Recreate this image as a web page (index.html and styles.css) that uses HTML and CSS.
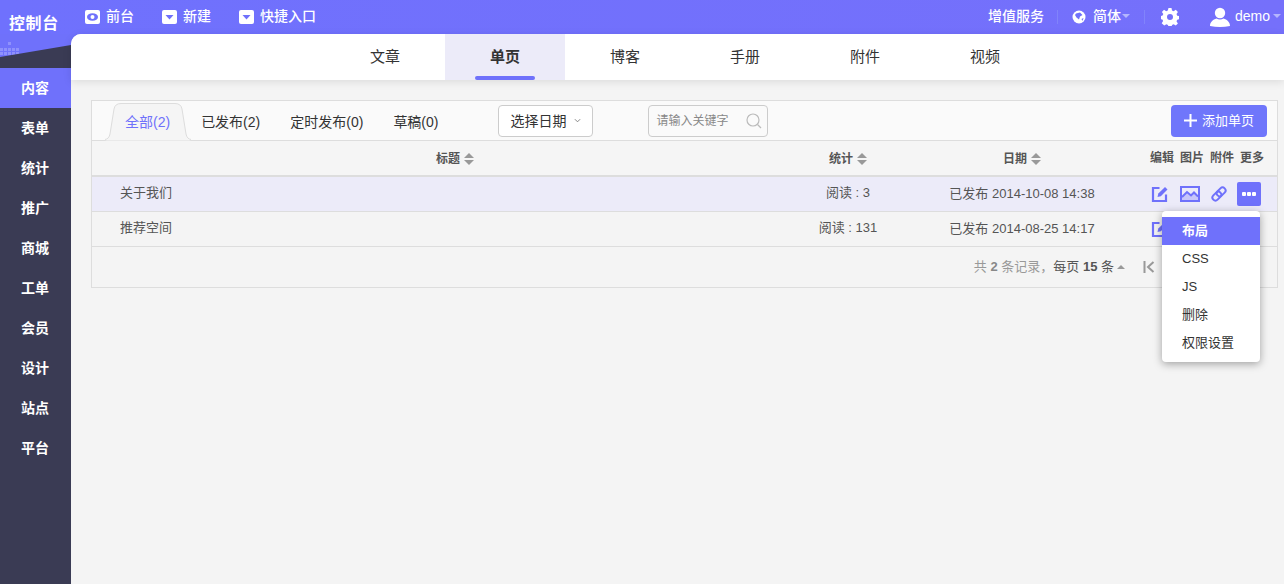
FILE: index.html
```html
<!DOCTYPE html>
<html lang="zh-CN">
<head>
<meta charset="utf-8">
<title>控制台</title>
<link rel="stylesheet" href="styles.css">
</head>
<body>
<div class="app">
  <header class="topbar">
    <div class="brand">控制台</div>
    <nav class="quick">
      <a class="quick-item"><svg class="qi" viewBox="0 0 15 14"><rect width="15" height="14" rx="2" fill="#fff"/><ellipse cx="7.5" cy="7" rx="5.5" ry="3.8" fill="#6f71fb"/><circle cx="7.5" cy="7" r="2" fill="#fff"/></svg>前台</a>
      <a class="quick-item"><svg class="qi" viewBox="0 0 15 14"><rect width="15" height="14" rx="2" fill="#fff"/><path d="M3.5 5h8l-4 4.500z" fill="#6f71fb"/></svg>新建</a>
      <a class="quick-item"><svg class="qi" viewBox="0 0 15 14"><rect width="15" height="14" rx="2" fill="#fff"/><path d="M3.5 5h8l-4 4.500z" fill="#6f71fb"/></svg>快捷入口</a>
    </nav>
    <div class="top-right">
      <a class="tr-item service">增值服务</a>
      <i class="sep"></i>
      <a class="tr-item lang"><svg class="globe" viewBox="0 0 14 14"><circle cx="7" cy="7" r="6.500" fill="#fff"/><path d="M4 3.500l4-1 2.500 2.500-2.500 1.500-1 3-2.500-2-1.500-2.500z" fill="#6f71fb"/><path d="M9.500 9l2-1-1 3z" fill="#6f71fb"/></svg>简体<i class="caret"></i></a>
      <i class="sep"></i>
      <a class="tr-item gear"><svg viewBox="0 0 18 18" width="18" height="18"><path fill="#fff" fill-rule="evenodd" d="M7.500 0h3l.5 2.500 1.600.7 2.200-1.400 2.100 2.100-1.400 2.200.7 1.600 2.300.5v3l-2.300.5-.7 1.600 1.400 2.200-2.100 2.100-2.200-1.400-1.600.7-.5 2.300h-3l-.5-2.300-1.600-.7-2.200 1.400L.7 15.300l1.400-2.200-.7-1.600L-.5 11V8l2.100-.5.7-1.600L.9 3.900 3 1.800l2.200 1.400 1.600-.7zM9 6a3 3 0 1 0 0 6 3 3 0 0 0 0-6z"/></svg></a>
      <a class="tr-item user"><svg class="avatar" viewBox="0 0 20 20"><circle cx="10" cy="6" r="5.200" fill="#fff"/><path d="M0 19c0-4 3-6.500 6.500-7.500 2 1.300 5 1.300 7 0C17 12.500 20 15 20 19q-10 2-20 0z" fill="#fff"/></svg>demo<i class="caret"></i></a>
    </div>
  </header>
  <div class="body">
    <aside class="sidebar">
      <div class="wedge">
        <svg viewBox="0 0 71 34" width="71" height="34"><g fill="#8f91fc"><rect x="0" y="14" width="3" height="3"/><rect x="4" y="14" width="3" height="3"/><rect x="8" y="8" width="3" height="3"/><rect x="8" y="14" width="3" height="3"/><rect x="8" y="18" width="3" height="3"/><rect x="12" y="14" width="3" height="3"/><rect x="16" y="14" width="3" height="3"/><rect x="0" y="18" width="3" height="3"/><rect x="4" y="18" width="3" height="3"/><rect x="12" y="18" width="3" height="3"/><rect x="16" y="18" width="3" height="2"/></g><path d="M0 23L71 11V34H0z" fill="#3a3b54"/></svg>
      </div>
      <ul class="menu">
        <li class="active">内容</li><li>表单</li><li>统计</li><li>推广</li><li>商城</li><li>工单</li><li>会员</li><li>设计</li><li>站点</li><li>平台</li>
      </ul>
    </aside>
    <main class="content">
      <nav class="subnav">
        <a>文章</a><a class="on">单页</a><a>博客</a><a>手册</a><a>附件</a><a>视频</a>
      </nav>
      <section class="panel">
        <div class="toolbar">
          <div class="tabs">
            <a class="tab current"><svg class="tab-shape" viewBox="0 0 86 40" width="86" height="40"><path d="M0 39.500Q4 39 5 33L9 8Q10 2.500 16 2.500H70Q76 2.500 77 8L81 33Q82 39 86 39.500z" fill="#f5f5f5"/><path d="M0 38.500Q4 38 5 33L9 8Q10 2.500 16 2.500H70Q76 2.500 77 8L81 33Q82 38 86 38.500" fill="none" stroke="#ddd"/></svg><span>全部(2)</span></a><a class="tab">已发布(2)</a><a class="tab">定时发布(0)</a><a class="tab">草稿(0)</a>
          </div>
          <button class="date-btn">选择日期<svg viewBox="0 0 8 5" width="7" height="5"><path d="M1 1l3 3 3-3" fill="none" stroke="#777"/></svg></button>
          <div class="search">请输入关键字<svg viewBox="0 0 16 16" width="16" height="16"><circle cx="7" cy="7" r="6" fill="none" stroke="#bbb" stroke-width="1.200"/><path d="M11.500 11.500l3.500 3.500" stroke="#bbb" stroke-width="1.200"/></svg></div>
          <button class="add-btn"><svg viewBox="0 0 13 13" width="13" height="13"><path d="M6.500 0v13M0 6.500h13" stroke="#fff" stroke-width="2"/></svg>添加单页</button>
        </div>
        <div class="row head">
          <div class="c-title">标题<i class="sort"></i></div>
          <div class="c-stat">统计<i class="sort"></i></div>
          <div class="c-date">日期<i class="sort"></i></div>
          <div class="c-act"><span>编辑</span><span>图片</span><span>附件</span><span>更多</span></div>
        </div>
        <div class="row item hover">
          <div class="c-name">关于我们</div>
          <div class="c-stat">阅读 : 3</div>
          <div class="c-date">已发布 2014-10-08 14:38</div>
          <div class="c-act icons">
            <svg class="ic" viewBox="0 0 18 18"><use href="#i-edit"/></svg>
            <svg class="ic wide" viewBox="0 0 20 16"><use href="#i-img"/></svg>
            <svg class="ic" viewBox="0 0 18 18"><use href="#i-link"/></svg>
            <span class="more"><i></i><i></i><i></i></span>
          </div>
        </div>
        <div class="row item">
          <div class="c-name">推荐空间</div>
          <div class="c-stat">阅读 : 131</div>
          <div class="c-date">已发布 2014-08-25 14:17</div>
          <div class="c-act icons">
            <svg class="ic" viewBox="0 0 18 18"><use href="#i-edit"/></svg>
          </div>
        </div>
        <div class="pager">
          <span class="total">共 <b>2</b> 条记录，</span><span class="per">每页 <b>15</b> 条</span><i class="up"></i>
          <svg class="first" viewBox="0 0 12 12" width="12" height="12"><path d="M1.500 0v12" stroke="#999" stroke-width="2"/><path d="M10.500 1L5 6l5.500 5" fill="none" stroke="#999" stroke-width="2"/></svg>
        </div>
        <div class="dropdown">
          <a class="sel">布局</a><a>CSS</a><a>JS</a><a>删除</a><a>权限设置</a>
        </div>
      </section>
    </main>
  </div>
</div>
<svg class="defs" width="0" height="0">
  <symbol id="i-edit" viewBox="0 0 18 18"><path d="M8.500 3H2v13h13V9.500" fill="none" stroke="#6f71fb" stroke-width="2.200"/><path d="M6.500 12l.8-3.500L14 2l2.500 2.500-6.700 6.700z" fill="#6f71fb"/></symbol>
  <symbol id="i-img" viewBox="0 0 20 16"><path d="M2 10l5-4 4 3 3-3 4 4v6H2z" fill="#6f71fb" fill-opacity=".3"/><rect x="1" y="1" width="18" height="14" fill="none" stroke="#6f71fb" stroke-width="2"/><path d="M2 11l5-5 4 3.500 3-3 4 4" fill="none" stroke="#6f71fb" stroke-width="2"/></symbol>
  <symbol id="i-link" viewBox="0 0 18 18"><g transform="rotate(-45 9 9)" fill="none" stroke="#6f71fb" stroke-width="2"><rect x="1" y="6" width="10" height="6" rx="3"/><rect x="7" y="6" width="10" height="6" rx="3"/></g></symbol>
</svg>
</body>
</html>
```
FILE: styles.css
```css
* { box-sizing: border-box; }
html, body { margin: 0; height: 100%; overflow: hidden; }
body { font: 14px/20px "Liberation Sans", "Noto Sans CJK SC", sans-serif; color: #333; background: #f4f4f4; }
a { color: inherit; text-decoration: none; }
ul { list-style: none; margin: 0; padding: 0; }
.defs { position: absolute; }
.app { height: 584px; display: flex; flex-direction: column; background: #6f71fb; }

.topbar { height: 34px; flex: none; display: flex; align-items: center; padding-bottom: 2px; color: #fff; background: linear-gradient(90deg, #6f71fd, #7570fb); }
.brand { width: 71px; padding: 16px 0 0 9px; font-size: 16px; font-weight: 700; letter-spacing: .6px; white-space: nowrap; }
.quick { display: flex; margin-left: 14px; gap: 28px; }
.quick-item { display: flex; align-items: center; gap: 6px; font-weight: 500; }
.qi { width: 15px; height: 14px; margin-top: 2px; }
.top-right { margin-left: auto; display: flex; align-items: center; }
.tr-item { display: flex; align-items: center; font-weight: 500; }
.service { margin-right: 13px; }
.sep { width: 1px; height: 14px; margin-top: 2px; background: #8183fb; }
.lang { margin: 0 14px 0 14px; }
.globe { width: 14px; height: 14px; margin: 2px 7px 0 0; }
.caret { width: 0; height: 0; margin-left: 1px; border: 4px solid transparent; border-top-color: #b5b6fd; border-bottom: 0; }
.gear { margin-left: 16px; }
.gear svg { margin-top: 2px; }
.user { margin-left: 31px; font-size: 14px; font-weight: 400; width: 74px; white-space: nowrap; }
.user .caret { margin-left: 3px; }
.avatar { width: 20px; height: 20px; margin: 2px 5px 0 0; }

.body { flex: 1; display: flex; min-height: 0; }
.sidebar { width: 71px; flex: none; background: #3a3b54; }
.wedge { height: 34px; background: #6f71fb; }
.wedge svg { display: block; }
.menu li { height: 40px; line-height: 40px; padding-right: 1px; text-align: center; color: #fff; font-weight: 700; font-size: 14px; }
.menu li.active { background: #6f71fb; }

.content { flex: 1; min-width: 0; background: #f4f4f4; border-top-left-radius: 10px; display: flex; flex-direction: column; }
.subnav { height: 46px; flex: none; background: #fff; border-top-left-radius: 10px; box-shadow: 0 2px 8px rgba(0,0,0,.1); display: flex; padding-left: 254px; }
.subnav a { width: 120px; text-align: center; line-height: 45px; font-size: 15px; color: #333; position: relative; }
.subnav a.on { background: #ecebf9; font-weight: 700; }
.subnav a.on::after { content: ""; position: absolute; left: 30px; right: 30px; bottom: 0; height: 4px; border-radius: 2px; background: #6f71fb; }

.panel { position: relative; margin: 20px 6px 0 20px; height: 188px; border: 1px solid #ddd; background: #f4f4f4; }
.toolbar { height: 40px; display: flex; align-items: center; background: #fafafa; border-bottom: 1px solid #ddd; }
.tabs { display: flex; align-self: flex-start; height: 39px; padding-left: 33px; }
.tab { padding-top: 11px; margin-right: 30px; color: #333; white-space: nowrap; }
.tab.current { color: #6f71fb; position: relative; margin-right: 31px; }
.tab.current + .tab { margin-right: 30px; }
.tab.current span { position: relative; }
.tab-shape { position: absolute; left: -20px; top: 0; }
.date-btn { margin-left: 29px; width: 95px; height: 32px; border: 1px solid #ccc; border-radius: 4px; background: #fff; font: inherit; font-size: 14px; color: #333; display: flex; align-items: center; justify-content: center; gap: 7px; padding: 0 0 0 1px; }
.search { margin-left: 55px; width: 120px; height: 32px; border: 1px solid #ccc; border-radius: 4px; background: #fafafa; font-size: 12px; color: #888; display: flex; align-items: center; justify-content: space-between; padding: 0 5px 0 8px; }
.add-btn { margin-left: auto; margin-right: 10px; width: 96px; height: 32px; border: 0; border-radius: 4px; background: #6f76fb; color: #fff; font: inherit; font-size: 13px; display: flex; align-items: center; justify-content: center; gap: 5px; padding: 0; }

.row { display: grid; grid-template-columns: 670px 172px 176px 1fr; align-items: center; }
.row > div { text-align: center; }
.head { height: 36px; padding-top: 2px; border-bottom: 2px solid #ddd; font-size: 12px; font-weight: 700; color: #555; background: #f5f5f5; }
.head > div { display: flex; justify-content: center; align-items: center; }
.head .c-title { padding-left: 56px; }
.head .c-act { justify-content: flex-start; padding-left: 40px; gap: 6px; white-space: nowrap; margin-top: -2px; }
.sort { display: inline-flex; flex-direction: column; gap: 2px; margin-left: 4px; }
.sort::before, .sort::after { content: ""; width: 0; height: 0; border: 5px solid transparent; border-top-width: 0; border-bottom-color: #999; }
.sort::after { border-bottom-width: 0; border-top: 5px solid #999; }
.item { height: 35px; border-bottom: 1px solid #ddd; font-size: 13px; color: #555; }
.hover { background: #ecebf9; }
.row > .c-name { text-align: left; padding: 0 0 2px 28px; }
.item .c-stat { padding-bottom: 2px; }
.icons { display: flex; align-items: center; padding-left: 41px; gap: 10px; height: 100%; }
.ic { width: 18px; height: 18px; flex: none; }
.ic.wide { width: 20px; height: 16px; margin-left: 1px; }
.more { width: 24px; height: 24px; flex: none; margin-left: -1px; border-radius: 2px; background: #6f71fb; display: flex; align-items: center; justify-content: center; gap: 1px; }
.more i { width: 4px; height: 4px; border-radius: 1px; background: #fff; }

.pager { height: 40px; display: flex; align-items: center; justify-content: flex-end; padding-right: 122px; font-size: 13px; color: #999; }
.per { color: #555; }
.pager b { font-weight: 700; }
.total b { color: #888; }
.up { width: 0; height: 0; margin: 0 18px 0 3px; border: 4px solid transparent; border-bottom-color: #999; border-top: 0; }

.dropdown { position: absolute; left: 1070px; top: 110px; width: 98px; height: 151px; padding: 6px 0; background: #fff; border-radius: 4px; box-shadow: 0 2px 8px rgba(0,0,0,.35); z-index: 5; font-size: 13px; color: #333; }
.dropdown a { display: block; height: 28px; line-height: 28px; padding-left: 20px; }
.dropdown a.sel { background: #6f71fb; color: #fff; font-weight: 700; }
```
